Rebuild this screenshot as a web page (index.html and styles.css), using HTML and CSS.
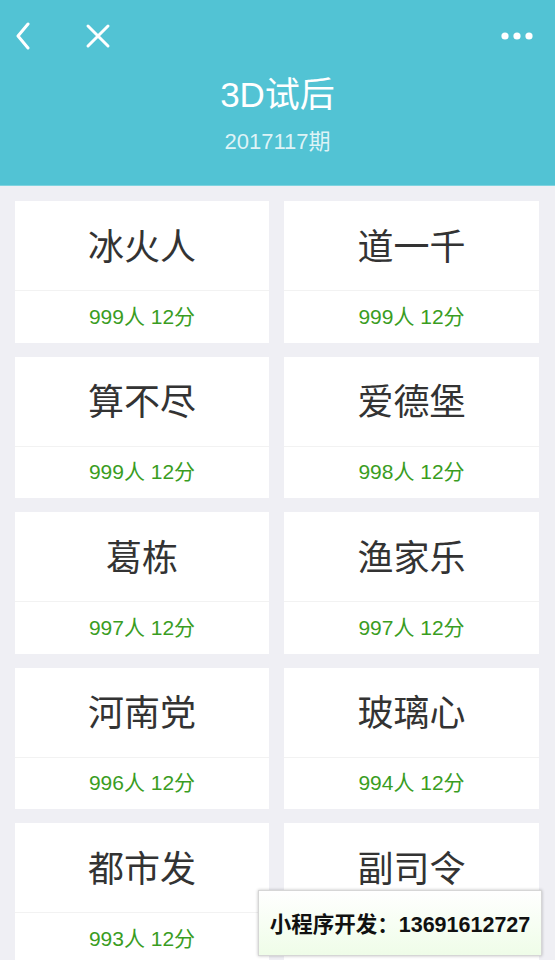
FILE: index.html
```html
<!DOCTYPE html>
<html lang="zh">
<head>
<meta charset="utf-8">
<title>3D试后</title>
<link rel="stylesheet" href="styles.css">
</head>
<body>
<header class="header">
  <div class="navbar">
    <div class="nav-left">
      <svg class="icon-back" width="16" height="28" viewBox="0 0 16 28"><path d="M13 2 L3 14 L13 26" fill="none" stroke="#fff" stroke-width="3" stroke-linecap="round" stroke-linejoin="round"/></svg>
      <svg class="icon-close" width="26" height="26" viewBox="0 0 26 26"><path d="M3 3 L23 23 M23 3 L3 23" fill="none" stroke="#fff" stroke-width="3" stroke-linecap="round"/></svg>
    </div>
    <svg class="icon-more" width="32" height="8" viewBox="0 0 32 8"><circle cx="4" cy="4" r="3.6" fill="#fff"/><circle cx="16" cy="4" r="3.6" fill="#fff"/><circle cx="28" cy="4" r="3.6" fill="#fff"/></svg>
  </div>
  <h1 class="title">3D试后</h1>
  <div class="subtitle">2017117期</div>
</header>
<main class="grid">
  <div class="card"><div class="name">冰火人</div><div class="score">999人 12分</div></div>
  <div class="card"><div class="name">道一千</div><div class="score">999人 12分</div></div>
  <div class="card"><div class="name">算不尽</div><div class="score">999人 12分</div></div>
  <div class="card"><div class="name">爱德堡</div><div class="score">998人 12分</div></div>
  <div class="card"><div class="name">葛栋</div><div class="score">997人 12分</div></div>
  <div class="card"><div class="name">渔家乐</div><div class="score">997人 12分</div></div>
  <div class="card"><div class="name">河南党</div><div class="score">996人 12分</div></div>
  <div class="card"><div class="name">玻璃心</div><div class="score">994人 12分</div></div>
  <div class="card"><div class="name">都市发</div><div class="score">993人 12分</div></div>
  <div class="card"><div class="name">副司令</div><div class="score">993人 12分</div></div>
</main>
<div class="promo">小程序开发：13691612727</div>
</body>
</html>
```
FILE: styles.css
```css
html, body {
  margin: 0;
  padding: 0;
}
body {
  width: 555px;
  height: 960px;
  overflow: hidden;
  background: #efeff4;
  font-family: "Liberation Sans", "Noto Sans CJK SC", sans-serif;
  position: relative;
}
.header {
  background: #52c3d4;
  height: 186px;
  border-bottom: 1px solid #7fd3df;
  box-sizing: border-box;
  color: #fff;
  text-align: center;
}
.navbar {
  height: 72px;
  display: flex;
  justify-content: space-between;
  align-items: center;
  padding: 0 22px 0 15px;
}
.nav-left {
  display: flex;
  align-items: center;
  gap: 54px;
}
.icon-back, .icon-close, .icon-more { display: block; }
.title {
  margin: 1px 0 0;
  font-size: 35px;
  font-weight: normal;
  line-height: 44px;
}
.subtitle {
  margin-top: 11px;
  font-size: 22px;
  line-height: 28px;
  color: rgba(255, 255, 255, 0.82);
}
.grid {
  display: grid;
  grid-template-columns: 254px 255px;
  column-gap: 15px;
  row-gap: 14px;
  padding: 15px 16px 0 15px;
}
.card {
  background: #fff;
  height: 141.5px;
  display: flex;
  flex-direction: column;
}
.name {
  height: 85px;
  padding-bottom: 4px;
  border-bottom: 1px solid #f2f2f2;
  display: flex;
  align-items: center;
  justify-content: center;
  font-size: 36px;
  color: #333;
  font-family: "Noto Sans CJK SC", sans-serif;
}
.score {
  flex: 1;
  display: flex;
  align-items: center;
  justify-content: center;
  padding-bottom: 4px;
  font-size: 21px;
  color: #3a9d1f;
}
.promo {
  position: absolute;
  left: 258px;
  top: 890px;
  width: 284px;
  height: 66px;
  box-sizing: border-box;
  border: 1px solid #d6d6d6;
  background: linear-gradient(#ffffff, #effde8);
  box-shadow: 0 0 3px rgba(0,0,0,0.25);
  display: flex;
  align-items: center;
  justify-content: center;
  padding-bottom: 2px;
  font-size: 21.5px;
  font-weight: bold;
  color: #111;
  font-family: "Liberation Sans", "Noto Sans CJK SC", sans-serif;
  white-space: nowrap;
}
```
